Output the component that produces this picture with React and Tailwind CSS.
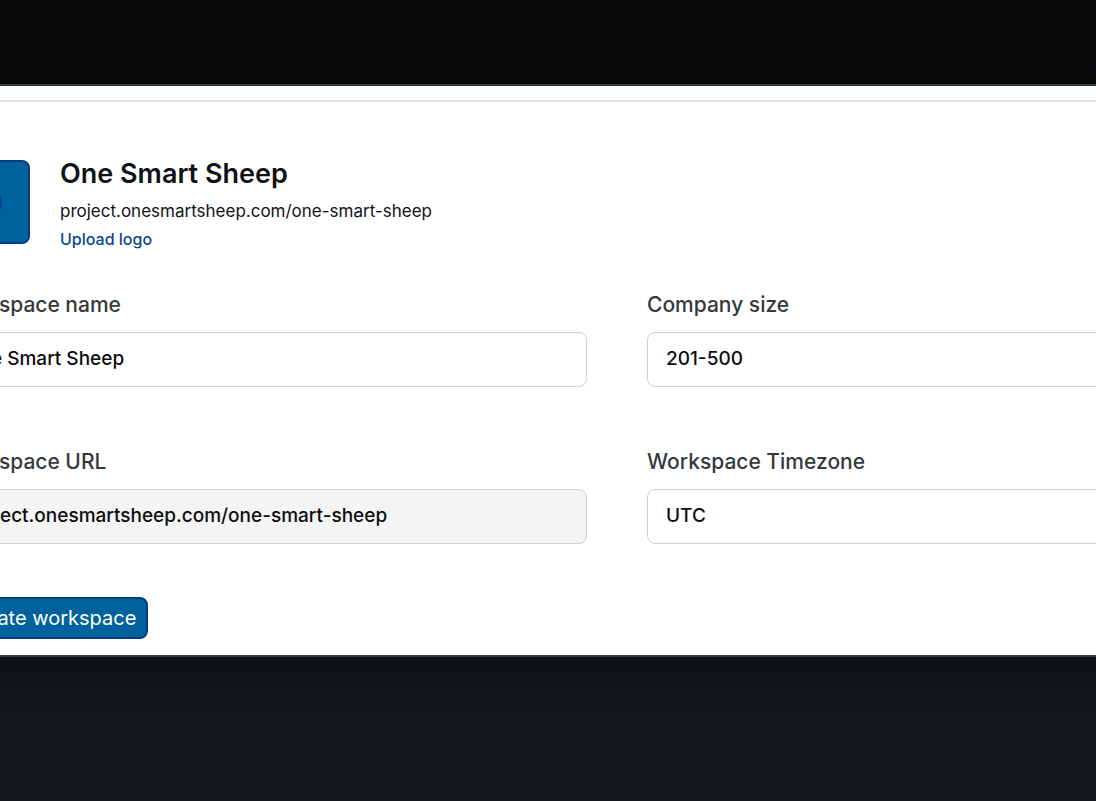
import React, { useState } from 'react';

const SIZES = ['1-10', '11-50', '51-200', '201-500', '500+'];
const TIMEZONES = ['UTC', 'Europe/Amsterdam', 'America/New_York'];

const labelClass = 'block text-[21px] leading-6 font-medium text-[#34393c]';
const fieldClass =
  'mt-[15px] block h-[55px] w-full appearance-none rounded-lg border border-[#cdd2d2] px-[18px] pb-0.5 text-[19px] leading-6 font-medium text-[#0c0e0f] outline-none focus:border-[#00629d]';

const Field = ({ id, label, children }) => (
  <div>
    <label htmlFor={id} className={labelClass}>{label}</label>
    {children}
  </div>
);

const App = () => {
  const [form, setForm] = useState({
    name: 'One Smart Sheep',
    size: '201-500',
    timezone: 'UTC'
  });

  const handleChange = (e) => setForm({ ...form, [e.target.name]: e.target.value });

  return (
    <div className="min-h-screen overflow-hidden bg-gradient-to-b from-[#08090b] via-[#0d1114] via-82% to-[#15191b] to-90% pt-[84px] font-['Inter',sans-serif]">
      <main className="-mx-[84px] border-y-2 border-[#353a3b] bg-white">
        <div className="h-4 border-b-2 border-[#dfe1e2]" />

        <form onSubmit={(e) => e.preventDefault()} className="-mr-[138px] px-[30px] pt-[58px] pb-4">
          <div className="flex gap-[30px]">
            <div className="flex size-[84px] items-center justify-center rounded-lg border-2 border-[#073b82] bg-[#00629d] text-[42px] text-[#07408a]">
              O
            </div>
            <div>
              <h1 className="text-[27px] leading-[27px] font-semibold text-[#101315]">One Smart Sheep</h1>
              <p className="mt-3 text-[17px] leading-6 text-[#101315]">project.onesmartsheep.com/one-smart-sheep</p>
              <a href="#logo" className="mt-1 block text-[16px] leading-6 font-medium text-[#0a468f]">Upload logo</a>
            </div>
          </div>

          <div className="mt-[42px] grid grid-cols-2 gap-x-[60px] gap-y-[63px]">
            <Field id="name" label="Workspace name">
              <input id="name" name="name" type="text" value={form.name} onChange={handleChange} className={fieldClass} />
            </Field>
            <Field id="size" label="Company size">
              <select id="size" name="size" value={form.size} onChange={handleChange} className={fieldClass}>
                {SIZES.map((size) => <option key={size}>{size}</option>)}
              </select>
            </Field>
            <Field id="url" label="Workspace URL">
              <input id="url" type="text" readOnly value="project.onesmartsheep.com/one-smart-sheep" className={`${fieldClass} bg-[#f4f4f4]`} />
            </Field>
            <Field id="timezone" label="Workspace Timezone">
              <select id="timezone" name="timezone" value={form.timezone} onChange={handleChange} className={fieldClass}>
                {TIMEZONES.map((zone) => <option key={zone}>{zone}</option>)}
              </select>
            </Field>
          </div>

          <button type="submit" className="mt-[53px] block h-[42px] rounded-lg border-2 border-[#073b82] bg-[#00629d] px-[10px] text-[20px] leading-6 text-white">
            Update workspace
          </button>
        </form>
      </main>
    </div>
  );
};

export default App;
